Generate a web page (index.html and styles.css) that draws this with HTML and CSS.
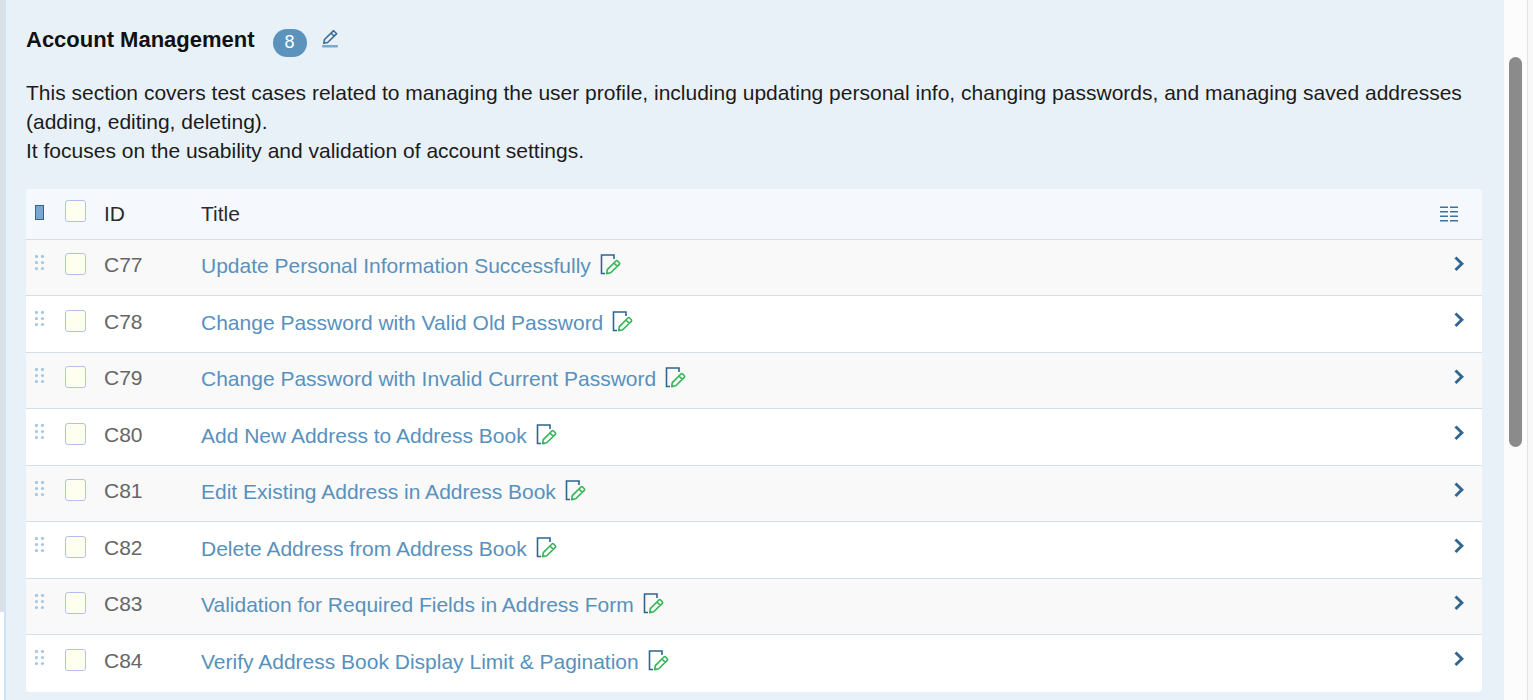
FILE: index.html
```html
<!DOCTYPE html>
<html lang="en">
<head>
<meta charset="utf-8">
<title>Account Management</title>
<link rel="stylesheet" href="styles.css">
</head>
<body>
<svg class="sprite" aria-hidden="true">
  <symbol id="edit" viewBox="0 0 22 22">
    <path d="M14 6V2H1.500v18.500H5" fill="none" stroke="#2f6690" stroke-width="1.600"/>
    <path d="M7.300 16.600 15.900 8a1.200 1.200 0 0 1 1.700 0l1.700 1.700a1.200 1.200 0 0 1 0 1.700L10.700 19.800 6.700 20.600zM13.900 10l3.400 3.400" fill="none" stroke="#35b558" stroke-width="1.600" stroke-linejoin="round"/>
  </symbol>
  <symbol id="grip" viewBox="0 0 10 16">
    <g fill="#a9c8df"><circle cx="1.500" cy="1.500" r="1.600"/><circle cx="7.500" cy="1.500" r="1.600"/><circle cx="1.500" cy="7.500" r="1.600"/><circle cx="7.500" cy="7.500" r="1.600"/><circle cx="1.500" cy="13.500" r="1.600"/><circle cx="7.500" cy="13.500" r="1.600"/></g>
  </symbol>
  <symbol id="chevron" viewBox="0 0 10 16">
    <path d="M1.500 1.500 7.900 7.700 1.500 14" fill="none" stroke="#32668f" stroke-width="2.900"/>
  </symbol>
</svg>
<div class="page">
  <div class="rail"><div class="rail-thumb"></div></div>
  <main class="content">
    <header class="heading">
      <h1>Account Management</h1>
      <span class="count">8</span>
      <button class="icon-button rename" aria-label="Edit section"><svg width="18" height="20" viewBox="0 0 18 20"><path d="M2.800 14.300 3.500 10.500 12.600 1.700 15.700 4.700 6.600 13.500zM10.200 4.200l3 3" fill="none" stroke="#3b6d94" stroke-width="1.600" stroke-linejoin="round"/><rect x="1" y="16" width="16" height="2.600" rx="1" fill="#7aa9cb"/></svg></button>
    </header>
    <p class="description">This section covers test cases related to managing the user profile, including updating personal info, changing passwords, and managing saved addresses (adding, editing, deleting).<br>It focuses on the usability and validation of account settings.</p>
    <table class="cases">
      <thead>
        <tr>
          <th class="drag"><span class="marker"></span></th>
          <th class="pick"><input type="checkbox" aria-label="Select all"></th>
          <th class="id">ID</th>
          <th class="title">Title</th>
          <th class="action"><button class="icon-button" aria-label="Columns"><svg width="20" height="18" viewBox="0 0 20 18"><path d="M1 2.200h8M11 2.200h8M1 6.800h8M11 6.800h8M1 11.200h8M11 11.200h8M1 15.800h8M11 15.800h8" stroke="#3f7199" stroke-width="1.600"/></svg></button></th>
        </tr>
      </thead>
      <tbody>
        <tr><td class="drag"><svg width="10" height="16"><use href="#grip"/></svg></td><td class="pick"><input type="checkbox" aria-label="Select C77"></td><td class="id">C77</td><td class="title"><a href="#c77">Update Personal Information Successfully</a><button class="icon-button" aria-label="Edit C77"><svg width="22" height="22"><use href="#edit"/></svg></button></td><td class="action"><button class="icon-button" aria-label="Open C77"><svg width="10" height="16"><use href="#chevron"/></svg></button></td></tr>
        <tr><td class="drag"><svg width="10" height="16"><use href="#grip"/></svg></td><td class="pick"><input type="checkbox" aria-label="Select C78"></td><td class="id">C78</td><td class="title"><a href="#c78">Change Password with Valid Old Password</a><button class="icon-button" aria-label="Edit C78"><svg width="22" height="22"><use href="#edit"/></svg></button></td><td class="action"><button class="icon-button" aria-label="Open C78"><svg width="10" height="16"><use href="#chevron"/></svg></button></td></tr>
        <tr><td class="drag"><svg width="10" height="16"><use href="#grip"/></svg></td><td class="pick"><input type="checkbox" aria-label="Select C79"></td><td class="id">C79</td><td class="title"><a href="#c79">Change Password with Invalid Current Password</a><button class="icon-button" aria-label="Edit C79"><svg width="22" height="22"><use href="#edit"/></svg></button></td><td class="action"><button class="icon-button" aria-label="Open C79"><svg width="10" height="16"><use href="#chevron"/></svg></button></td></tr>
        <tr><td class="drag"><svg width="10" height="16"><use href="#grip"/></svg></td><td class="pick"><input type="checkbox" aria-label="Select C80"></td><td class="id">C80</td><td class="title"><a href="#c80">Add New Address to Address Book</a><button class="icon-button" aria-label="Edit C80"><svg width="22" height="22"><use href="#edit"/></svg></button></td><td class="action"><button class="icon-button" aria-label="Open C80"><svg width="10" height="16"><use href="#chevron"/></svg></button></td></tr>
        <tr><td class="drag"><svg width="10" height="16"><use href="#grip"/></svg></td><td class="pick"><input type="checkbox" aria-label="Select C81"></td><td class="id">C81</td><td class="title"><a href="#c81">Edit Existing Address in Address Book</a><button class="icon-button" aria-label="Edit C81"><svg width="22" height="22"><use href="#edit"/></svg></button></td><td class="action"><button class="icon-button" aria-label="Open C81"><svg width="10" height="16"><use href="#chevron"/></svg></button></td></tr>
        <tr><td class="drag"><svg width="10" height="16"><use href="#grip"/></svg></td><td class="pick"><input type="checkbox" aria-label="Select C82"></td><td class="id">C82</td><td class="title"><a href="#c82">Delete Address from Address Book</a><button class="icon-button" aria-label="Edit C82"><svg width="22" height="22"><use href="#edit"/></svg></button></td><td class="action"><button class="icon-button" aria-label="Open C82"><svg width="10" height="16"><use href="#chevron"/></svg></button></td></tr>
        <tr><td class="drag"><svg width="10" height="16"><use href="#grip"/></svg></td><td class="pick"><input type="checkbox" aria-label="Select C83"></td><td class="id">C83</td><td class="title"><a href="#c83">Validation for Required Fields in Address Form</a><button class="icon-button" aria-label="Edit C83"><svg width="22" height="22"><use href="#edit"/></svg></button></td><td class="action"><button class="icon-button" aria-label="Open C83"><svg width="10" height="16"><use href="#chevron"/></svg></button></td></tr>
        <tr><td class="drag"><svg width="10" height="16"><use href="#grip"/></svg></td><td class="pick"><input type="checkbox" aria-label="Select C84"></td><td class="id">C84</td><td class="title"><a href="#c84">Verify Address Book Display Limit &amp; Pagination</a><button class="icon-button" aria-label="Edit C84"><svg width="22" height="22"><use href="#edit"/></svg></button></td><td class="action"><button class="icon-button" aria-label="Open C84"><svg width="10" height="16"><use href="#chevron"/></svg></button></td></tr>
      </tbody>
    </table>
  </main>
  <div class="scroll-track"><div class="scroll-thumb"></div></div>
  <div class="edge"></div>
</div>
</body>
</html>
```
FILE: styles.css
```css
* { box-sizing: border-box; }
body {
  margin: 0;
  background: #e9f1f8;
  color: #1b1b1b;
  font: 21px/30px "Liberation Sans", Arial, sans-serif;
}
.sprite { position: absolute; width: 0; height: 0; }
.page { display: flex; min-height: 100vh; }
.rail { flex: 0 0 6px; background: #fff; border-right: 2px solid #d0e2ee; }
.rail-thumb { height: 612px; background: #dddfe6; }
.content { flex: 1; min-width: 0; padding: 24px 22px 8px 20px; }
.heading { display: flex; align-items: flex-start; }
h1 { margin: 0; font-size: 22px; line-height: 32px; color: #111; }
.count {
  margin: 5px 0 0 18px;
  width: 34px;
  height: 28px;
  border-radius: 14px;
  background: #5b93bd;
  color: #fff;
  font-size: 18px;
  line-height: 27px;
  text-align: center;
}
.icon-button { padding: 0; border: 0; background: none; cursor: pointer; }
.icon-button svg, .drag svg { display: block; }
.rename { margin: 5px 0 0 14px; }
.description { margin: 21px 0 24px; line-height: 29px; }
.cases {
  width: 100%;
  table-layout: fixed;
  border-collapse: separate;
  border-spacing: 0;
  border-radius: 4px;
  overflow: hidden;
  background: #fff;
}
th, td { padding: 0; text-align: left; vertical-align: top; border-bottom: 1px solid #d0dfea; }
th { height: 51px; background: #f5f9fe; font-weight: normal; color: #2b2b2b; }
td { height: 56px; color: #666; }
tr:nth-child(even) td { height: 57px; }
tbody tr:nth-child(odd) td { background: #f9f9f9; }
tbody tr:last-child td { border-bottom: 0; }
.drag { width: 39px; padding: 15px 0 0 9px; }
.pick { width: 39px; padding-top: 13px; }
.id { width: 97px; padding-top: 10px; }
.title { padding-top: 11px; }
.action { width: 46px; padding: 16px 0 0 18px; }
tr:nth-child(even) .pick { padding-top: 14px; }
tr:nth-child(even) .id { padding-top: 11px; }
tr:nth-child(even) .title { padding-top: 12px; }
th.drag { padding-top: 16px; }
th.title { padding-top: 10px; }
th.pick { padding-top: 11px; }
th.action { padding: 16px 0 0 3px; }
.marker { display: block; width: 9px; height: 15px; border: 1px solid #2f6690; background: #77a7ca; }
input[type="checkbox"] {
  appearance: none;
  display: block;
  margin: 0;
  width: 21px;
  height: 22px;
  border: 1px solid #b3c0ee;
  border-radius: 3px;
  background: #fffff0;
}
.title a { color: #5891bd; text-decoration: none; }
.title .icon-button { margin-left: 9px; vertical-align: -2px; }
.action .icon-button { display: block; }
td.title { white-space: nowrap; }
.scroll-track { flex: 0 0 23px; padding: 57px 5px 0; background: #fcfcfc; }
.scroll-thumb { height: 390px; border-radius: 7px; background: #8b8b8b; }
.edge { flex: 0 0 6px; border-left: 1px solid #e3e3e3; background: #f8f8f8; }
```
